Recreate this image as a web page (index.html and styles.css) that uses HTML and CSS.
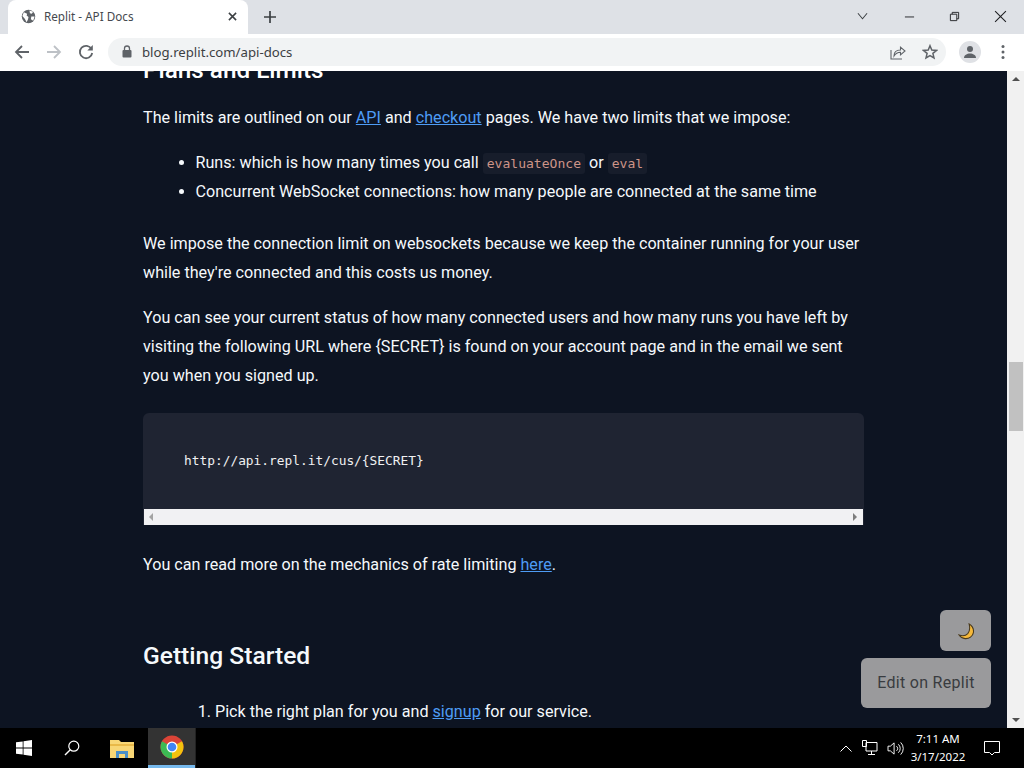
FILE: index.html
```html
<!DOCTYPE html>
<html lang="en">
<head>
<meta charset="utf-8">
<title>Replit - API Docs</title>
<link rel="stylesheet" href="styles.css">
</head>
<body>
<div class="window">
  <header class="tabstrip">
    <div class="tab">
      <svg class="favicon" viewBox="0 0 16 16"><circle cx="8" cy="8" r="7.2" fill="#5f6368"/><path d="M3 3.5 6.5 5 6 7 8 8.500 7.500 11 6 14 4 10.500 1.500 7.500ZM9 1.500 13 3 11.500 5 9.500 4.500ZM11 8h3.500L13 12.500 10.500 11Z" fill="#fff"/></svg>
      <span class="tab-title">Replit - API Docs</span>
      <svg class="tab-close" viewBox="0 0 10 10"><path d="M1 1 9 9M9 1 1 9" stroke="#3c4043" stroke-width="1.700"/></svg>
    </div>
    <svg class="new-tab" viewBox="0 0 12 12"><path d="M6 0v12M0 6h12" stroke="#3c4043" stroke-width="1.700"/></svg>
    <div class="win-controls">
      <svg class="win-chevron" viewBox="0 0 12 8"><path d="M1 1 6 7 11 1" fill="none" stroke="#3c4043" stroke-width="1.100"/></svg>
      <svg class="win-btn" viewBox="0 0 12 12"><path d="M1 6.500h10" stroke="#202124" stroke-width="1"/></svg>
      <svg class="win-btn" viewBox="0 0 12 12"><path d="M1.500 3.500h7v7h-7zM3.500 3.500v-2h7v7h-2" fill="none" stroke="#202124" stroke-width="1"/></svg>
      <svg class="win-btn win-x" viewBox="0 0 12 12"><path d="M1 1 11 11M11 1 1 11" stroke="#202124" stroke-width="1"/></svg>
    </div>
  </header>

  <nav class="toolbar">
    <svg class="nav-icon" viewBox="0 0 16 16"><path d="M15 8H2M8 2 2 8l6 6" fill="none" stroke="#5f6368" stroke-width="1.800"/></svg>
    <svg class="nav-icon" viewBox="0 0 16 16"><path d="M1 8h13M8 2l6 6-6 6" fill="none" stroke="#bdc1c6" stroke-width="1.800"/></svg>
    <svg class="nav-icon" viewBox="0 0 16 16"><path d="M13.500 5A6.200 6.200 0 1 0 14.200 9" fill="none" stroke="#5f6368" stroke-width="1.800"/><path d="M14.800 1v5.500H9.300z" fill="#5f6368"/></svg>
    <div class="omnibox">
      <svg class="lock" viewBox="0 0 10 13"><path d="M2.500 5V3.500a2.500 2.500 0 0 1 5 0V5" fill="none" stroke="#5f6368" stroke-width="1.300"/><rect x="0.500" y="5" width="9" height="7.500" rx="1" fill="#5f6368"/></svg>
      <span class="url">blog.replit.com/api-docs</span>
      <svg class="omni-share" viewBox="0 0 16 16"><path d="M1 6v9h11" fill="none" stroke="#5f6368" stroke-width="1.100"/><path d="M4 12c0-4 2.500-6 6.500-6V3.200L15 7l-4.500 3.800V8.200C7.500 8.200 5.500 9.500 4 12Z" fill="none" stroke="#5f6368" stroke-width="1.100"/></svg>
      <svg class="omni-star" viewBox="0 0 16 16"><path d="M8 1.700 9.800 6l4.700.4-3.600 3 1.100 4.600-4-2.400-4 2.400 1.100-4.600-3.600-3L6.200 6Z" fill="none" stroke="#5f6368" stroke-width="1.500"/></svg>
    </div>
    <div class="avatar"><svg viewBox="0 0 16 16"><circle cx="8" cy="5" r="3" fill="#5f6368"/><path d="M2 14c0-3 3-4.500 6-4.500s6 1.500 6 4.500z" fill="#5f6368"/></svg></div>
    <svg class="kebab" viewBox="0 0 4 16"><circle cx="2" cy="2.500" r="1.500" fill="#5f6368"/><circle cx="2" cy="8" r="1.500" fill="#5f6368"/><circle cx="2" cy="13.500" r="1.500" fill="#5f6368"/></svg>
  </nav>

  <div class="viewport">
    <main class="page">
      <article class="article">
        <h2 class="h-plans">Plans and Limits</h2>
        <p>The limits are outlined on our <a href="#">API</a> and <a href="#">checkout</a> pages. We have two limits that we impose:</p>
        <ul>
          <li>Runs: which is how many times you call <code>evaluateOnce</code> or <code>eval</code></li>
          <li>Concurrent WebSocket connections: how many people are connected at the same time</li>
        </ul>
        <p>We impose the connection limit on websockets because we keep the container running for your user while they're connected and this costs us money.</p>
        <p>You can see your current status of how many connected users and how many runs you have left by visiting the following URL where {SECRET} is found on your account page and in the email we sent you when you signed up.</p>
        <div class="codeblock">
          <pre class="code">http://api.repl.it/cus/{SECRET}</pre>
          <div class="hscroll"><span class="arrow-l"></span><span class="arrow-r"></span></div>
        </div>
        <p class="after-code">You can read more on the mechanics of rate limiting <a href="#">here</a>.</p>
        <h2 class="h-start">Getting Started</h2>
        <ol>
          <li>Pick the right plan for you and <a href="#">signup</a> for our service.</li>
        </ol>
      </article>
      <div class="floaters">
        <div class="fbtn moon"><svg viewBox="0 0 16 16"><path d="M10.500 1C13 2.500 15 5.500 14.500 9c-.6 3.500-4 6-7.800 5.700C4.500 14.500 2.300 13.300 1 11.300c3.200 1.200 6.300.7 8.200-1.300 1.700-2 2.100-5.800 1.300-9Z" fill="#f6b93b" stroke="#4a3a1c" stroke-width="1"/></svg></div>
        <div class="fbtn edit">Edit on Replit</div>
      </div>
    </main>
    <div class="vscroll">
      <span class="v-up"></span>
      <span class="v-thumb"></span>
      <span class="v-down"></span>
    </div>
  </div>

  <footer class="taskbar">
    <svg class="t-win" viewBox="0 0 16 16"><path d="M0 2.300 6.700 1.400V7.600H0ZM7.500 1.300 16 0V7.600H7.500ZM0 8.400H6.700V14.600L0 13.700ZM7.500 8.400H16V16L7.500 14.700Z" fill="#fff"/></svg>
    <svg class="t-search" viewBox="0 0 16 16"><circle cx="9.800" cy="6.200" r="5" fill="none" stroke="#fff" stroke-width="1.200"/><path d="M6.300 9.800 1 15" stroke="#fff" stroke-width="1.400"/></svg>
    <svg class="t-folder" viewBox="0 0 24 20"><path d="M0 2h9l2 2h13v16H0z" fill="#f8d675"/><path d="M0 6h24v2H0z" fill="#e9b949"/><path d="M6 20v-7h12v7h-3v-4H9v4z" fill="#4a8fc9"/></svg>
    <div class="t-chrome">
      <svg viewBox="0 0 24 24"><circle cx="12" cy="12" r="11.500" fill="#db4437"/><path d="M12 12 22 6.300A11.500 11.500 0 0 1 12 23.500Z" fill="#f4c20d"/><path d="M12 12 12 23.500A11.500 11.500 0 0 1 2 6.300Z" fill="#3cba54"/><circle cx="12" cy="12" r="5.500" fill="#fff"/><circle cx="12" cy="12" r="4.300" fill="#4285f4"/></svg>
    </div>
    <div class="t-sep"></div>
    <div class="tray">
      <svg class="tray-up" viewBox="0 0 12 7"><path d="M.5 6.500 6 1l5.500 5.500" fill="none" stroke="#fff" stroke-width="1"/></svg>
      <svg class="tray-net" viewBox="0 0 16 16"><path d="M4 2.500h11v8.500H4zM.5.500h4v6h-4zM9.500 11v3M6 14.500h7" fill="#000" stroke="#fff" stroke-width="1"/></svg>
      <svg class="tray-vol" viewBox="0 0 18 16"><path d="M1 5.500h2.500L7.500 2v12L3.500 10.500H1z" fill="none" stroke="#fff" stroke-width="1"/><path d="M10 5.500a3 3 0 0 1 0 5M12 3.500a6 6 0 0 1 0 9M14.500 1.500a9 9 0 0 1 0 13" fill="none" stroke="#fff" stroke-width="1"/></svg>
      <div class="clock"><span>7:11 AM</span><span>3/17/2022</span></div>
      <svg class="tray-note" viewBox="0 0 16 16"><path d="M.5 1.500h15v11h-5L8 15l-2.500-2.500h-5z" fill="none" stroke="#fff" stroke-width="1"/></svg>
    </div>
  </footer>
</div>
</body>
</html>
```
FILE: styles.css
```css
* { box-sizing: border-box; }
html, body { margin: 0; height: 100%; overflow: hidden; }
body { font-family: "Noto Sans", sans-serif; }
.window { width: 1024px; height: 768px; display: flex; flex-direction: column; }

/* tab strip */
.tabstrip { height: 34px; flex: none; background: #dee1e6; display: flex; align-items: center; padding-left: 8px; }
.tab { width: 240px; height: 34px; background: #fff; border-radius: 8px 8px 0 0; display: flex; align-items: center; padding: 0 11px 2px 13px; }
.favicon { width: 15px; height: 15px; flex: none; }
.tab-title { flex: 1; margin-left: 8px; font: 11.700px "Noto Sans", sans-serif; color: #45494e; }
.tab-close { width: 9px; height: 9px; flex: none; }
.new-tab { width: 12px; height: 12px; margin-left: 16px; flex: none; }
.win-controls { margin-left: auto; display: flex; align-items: center; height: 100%; padding-right: 17px; }
.win-chevron { width: 11px; height: 8px; margin-right: 36px; position: relative; top: -1px; }
.win-btn { width: 11px; height: 11px; margin-left: 34px; position: relative; top: -1px; }
.win-chevron + .win-btn { margin-left: 0; }
.win-x { width: 13px; height: 13px; margin-left: 34px; }

/* toolbar */
.toolbar { height: 37px; flex: none; background: #fff; display: flex; align-items: center; padding: 0 0 2px 14px; gap: 0; }
.nav-icon { width: 16px; height: 16px; margin-right: 16px; flex: none; }
.omnibox { width: 838px; height: 28px; margin-left: -2px; background: #f1f3f4; border-radius: 14px; display: flex; align-items: center; padding: 0 8px 0 14px; }
.lock { width: 10px; height: 13px; flex: none; }
.url { flex: 1; margin-left: 10px; font: 13.200px "Noto Sans", sans-serif; color: #3c4043; }
.omni-share { width: 16px; height: 16px; margin-right: 16px; }
.omni-star { width: 16px; height: 16px; }
.avatar { width: 22px; height: 22px; border-radius: 50%; background: #dfe1e5; margin-left: 13px; padding: 3px; flex: none; }
.avatar svg { display: block; }
.kebab { width: 4px; height: 16px; margin-left: 20px; flex: none; }

/* page */
.viewport { flex: 1; min-height: 0; display: flex; background: #fff; }
.page { flex: 1; position: relative; overflow: hidden; background: #0d1422; color: #f5f9fc; font-family: "Roboto", sans-serif; font-size: 16.150px; line-height: 29px; }
.article { width: 721px; margin: -21px auto 0; }
.article p { margin: 0 0 16px; }
.article a { color: #4e9cf5; }
.h-plans { margin: 0 0 13px; font-size: 24.300px; line-height: 40px; font-weight: 500; color: #fff; }
.h-start { margin: 0; font-size: 24.600px; line-height: 32px; font-weight: 500; color: #f5f9fc; }
ul, ol { margin: 16px 0 23px; padding-left: 52.500px; }
ol { margin: 25px 0 0; padding-left: 72px; }
code { font-family: "DejaVu Sans Mono", monospace; font-size: 13.050px; line-height: 1; color: #cd9488; background: #171d2b; padding: 3px 4px; border-radius: 3px; }
.article .after-code { margin: 25px 0 61px; }
.codeblock { margin-top: 23px; background: #1f2432; border-radius: 6px 6px 0 0; overflow: hidden; }
.code { margin: 0; height: 96px; padding: 33px 41px; font-family: "DejaVu Sans Mono", monospace; font-size: 12.850px; line-height: 29px; color: #f0f1f2; }
.hscroll { height: 16px; background: #f1f1f3; margin: 0 1px 0 1px; display: flex; align-items: center; justify-content: space-between; padding: 0 6px 0 5px; }
.arrow-l { width: 0; height: 0; border: 4px solid transparent; border-left: 0; border-right: 4px solid #a3a3a3; }
.arrow-r { width: 0; height: 0; border: 4px solid transparent; border-right: 0; border-left: 4px solid #7d7d7d; }

/* floating buttons */
.floaters { position: absolute; right: 16px; bottom: 20px; display: flex; flex-direction: column; align-items: flex-end; gap: 7px; }
.fbtn { background: #9a9a9c; border-radius: 6px; display: flex; align-items: center; justify-content: center; }
.moon { width: 51px; height: 41px; padding: 1px 0 0 1px; }
.moon svg { width: 17px; height: 17px; }
.edit { width: 130px; height: 50px; padding-bottom: 2px; font-size: 16px; color: #393c40; letter-spacing: .3px; }

/* scrollbar */
.vscroll { width: 17px; flex: none; background: #f1f1f1; position: relative; display: flex; flex-direction: column; align-items: center; }
.v-up { width: 0; height: 0; margin-top: 6px; border: 4px solid transparent; border-top: 0; border-bottom: 4px solid #505050; }
.v-thumb { width: 14px; height: 69px; background: #c1c1c1; margin-top: 281px; }
.v-down { width: 0; height: 0; margin-top: auto; margin-bottom: 6px; border: 4px solid transparent; border-bottom: 0; border-top: 4px solid #505050; }

/* taskbar */
.taskbar { height: 40px; flex: none; background: #000; display: flex; align-items: center; padding-left: 16px; color: #fff; }
.t-win { width: 16px; height: 16px; flex: none; }
.t-search { width: 16px; height: 16px; margin-left: 32px; flex: none; }
.t-folder { width: 24px; height: 20px; margin-left: 30px; flex: none; }
.t-chrome { width: 47px; height: 40px; margin-left: 14px; background: #333; border-bottom: 3px solid #76b9ed; display: flex; align-items: center; justify-content: center; flex: none; }
.t-chrome svg { width: 24px; height: 24px; }
.t-sep { width: 1px; height: 40px; background: #222; flex: none; }
.tray { margin-left: auto; display: flex; align-items: center; }
.tray-up { width: 12px; height: 7px; margin-right: 10px; }
.tray-net { width: 16px; height: 16px; margin-right: 9px; }
.tray-vol { width: 17px; height: 15px; margin-right: -4px; }
.clock { width: 76px; display: flex; flex-direction: column; align-items: center; font: 11.500px/18px "Noto Sans", sans-serif; }
.tray-note { width: 16px; height: 16px; margin: 0 24px 0 8px; }
```
